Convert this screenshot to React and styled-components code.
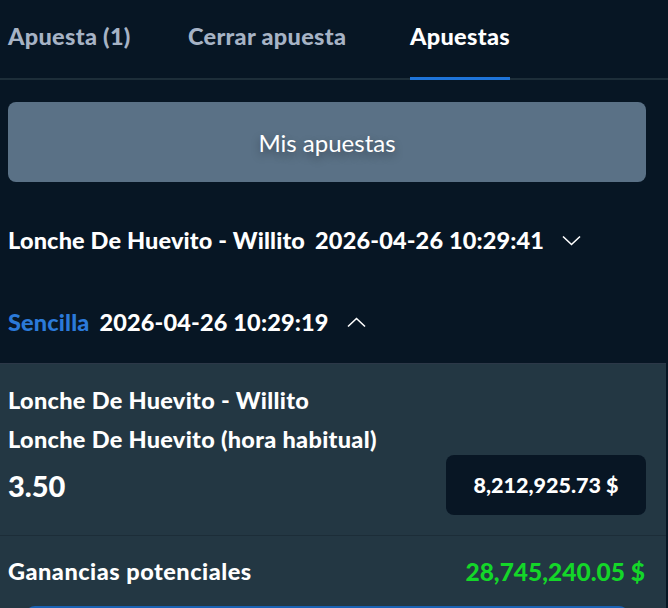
import styled, { createGlobalStyle } from "styled-components";

const Global = createGlobalStyle`
    body {
        margin: 0;
        background-color: #071624;
        font-family: Lato, "Noto Sans", sans-serif;
        color: white;
    }
`

const Page = styled.div`
    width: 668px;
    height: 608px;
    overflow: hidden;
    display: flex;
    flex-direction: column;
    & > * {
        flex-shrink: 0;
    }
`

const Tabs = styled.div`
    display: flex;
    height: 78px;
    padding-left: 8px;
    border-bottom: 2px solid #1d2e39;
`

const Tab = styled.div`
    width: ${props => props.width}px;
    height: 100%;
    display: flex;
`

const TabLabel = styled.div`
    display: flex;
    align-items: center;
    box-sizing: border-box;
    height: calc(100% + 2px);
    padding-bottom: 5px;
    font-size: 23.5px;
    font-weight: 900;
    letter-spacing: 0.3px;
    color: ${props => props.active ? "#ffffff" : "#a6b3c5"};
    border-bottom: 3px solid ${props => props.active ? "#1e74d8" : "transparent"};
`

const Content = styled.div`
    padding: 22px 22px 0 8px;
`

const MisButton = styled.div`
    height: 80px;
    border-radius: 8px;
    background-color: #5a7186;
    display: flex;
    align-items: center;
    justify-content: center;
    font-size: 24px;
    text-shadow: 0 4px 8px rgba(0, 0, 0, 0.35);
`

const Rows = styled.div`
    margin-top: 17px;
`

const Row = styled.div`
    height: 82px;
    display: flex;
    align-items: center;
    gap: 10px;
    font-size: 23.5px;
    font-weight: 900;
    letter-spacing: 0.15px;
`

const Type = styled.span`
    color: #2b7ad9;
`

const Chevron = styled.svg`
    width: 19px;
    height: 11px;
    margin-left: 8px;
    fill: none;
    stroke: white;
    stroke-width: 1.6;
`

const Card = styled.div`
    width: 666px;
    background-color: #233743;
    border-top: 1px solid #2c3848;
    flex: 1;
`

const Section = styled.div`
    padding: ${props => props.pad};
    border-bottom: ${props => props.line ? "1px solid #1c2d38" : "none"};
`

const Line = styled.div`
    font-size: 23.5px;
    font-weight: 900;
    letter-spacing: 0.3px;
    line-height: 24px;
    margin-bottom: ${props => props.gap}px;
`

const StakeRow = styled.div`
    display: flex;
    align-items: center;
    justify-content: space-between;
`

const Odds = styled.div`
    font-size: 29px;
    font-weight: 900;
`

const Stake = styled.div`
    width: 200px;
    height: 60px;
    border-radius: 8px;
    background-color: #081624;
    display: flex;
    align-items: center;
    justify-content: center;
    font-size: 21.5px;
    font-weight: 900;
`

const Total = styled.div`
    display: flex;
    justify-content: space-between;
    align-items: center;
    height: 70px;
    font-size: 23.5px;
    font-weight: 900;
    letter-spacing: 0.5px;
`

const Green = styled.span`
    color: #14d629;
    font-size: 24.5px;
    letter-spacing: 0;
`

const PlaceButton = styled.div`
    margin: 0 16px 0 17px;
    height: 40px;
    border-radius: 10px;
    background-color: #1a62b4;
`

function Down() {
    return (
        <Chevron viewBox="0 0 19 11">
            <polyline points="1,1.5 9.5,9.5 18,1.5" />
        </Chevron>
    )
}

function Up() {
    return (
        <Chevron viewBox="0 0 19 11">
            <polyline points="1,9.5 9.5,1.5 18,9.5" />
        </Chevron>
    )
}

export default function App() {
    return (
        <Page>
            <Global />
            <Tabs>
                <Tab width={180}><TabLabel>Apuesta (1)</TabLabel></Tab>
                <Tab width={222}><TabLabel>Cerrar apuesta</TabLabel></Tab>
                <Tab><TabLabel active>Apuestas</TabLabel></Tab>
            </Tabs>
            <Content>
                <MisButton>Mis apuestas</MisButton>
                <Rows>
                    <Row>
                        <span>Lonche De Huevito - Willito</span>
                        <span>2026-04-26 10:29:41</span>
                        <Down />
                    </Row>
                    <Row>
                        <Type>Sencilla</Type>
                        <span>2026-04-26 10:29:19</span>
                        <Up />
                    </Row>
                </Rows>
            </Content>
            <Card>
                <Section pad="24px 20px 20px 8px" line>
                    <Line gap={15}>Lonche De Huevito - Willito</Line>
                    <Line gap={4}>Lonche De Huevito (hora habitual)</Line>
                    <StakeRow>
                        <Odds>3.50</Odds>
                        <Stake>8,212,925.73 $</Stake>
                    </StakeRow>
                </Section>
                <Section pad="0 21px 0 8px">
                    <Total>
                        <span>Ganancias potenciales</span>
                        <Green>28,745,240.05 $</Green>
                    </Total>
                    <PlaceButton />
                </Section>
            </Card>
        </Page>
    )
}
